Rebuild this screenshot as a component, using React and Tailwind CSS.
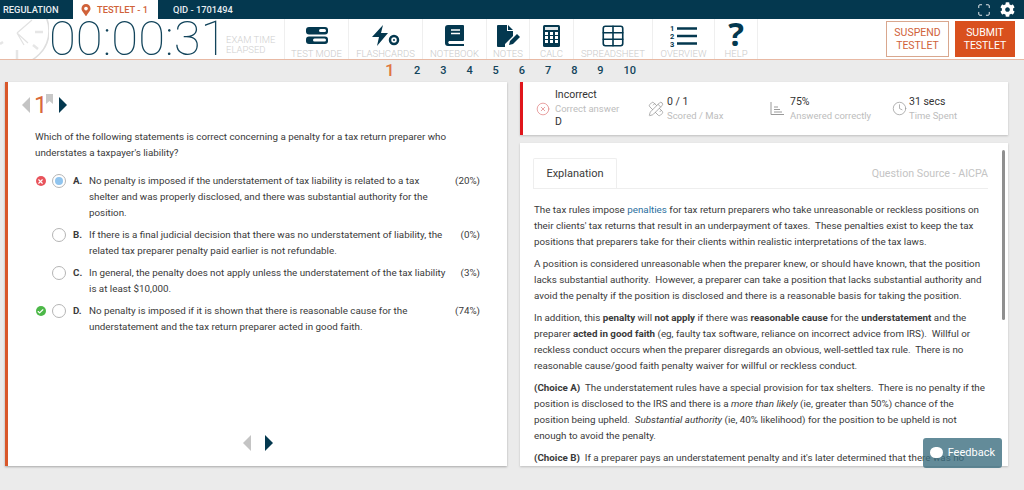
import React from "react";
import { Maximize, Table, XCircle, Clock, PencilRuler, Check, X } from "lucide-react";
import { FaCog, FaMapMarkerAlt } from "react-icons/fa";

const Tool = ({ icon, label, w }) => (
  <div className={`flex flex-col items-center justify-between h-full border-r border-[#efefef] pt-[5px] ${w}`}>
    <div className="h-[23px] flex items-center justify-center text-[#04384f]">{icon}</div>
    <span className="text-[9.5px] leading-[11px] text-[#c9c9c9] font-light whitespace-nowrap">{label}</span>
  </div>
);

const Tri = ({ dir, color, className }) => (
  <svg width="9" height="16" viewBox="0 0 9 16" className={className}>
    <path d={dir === "l" ? "M8 0v16L0 8z" : "M1 0v16l8-8z"} fill={color} />
  </svg>
);

const Choice = ({ status, selected, letter, pct, lines }) => (
  <div className="flex items-start">
    <div className="w-[13px] h-[16px] flex items-center justify-center mr-[5px] shrink-0">
      {status === "bad" && <span className="w-[10px] h-[10px] rounded-full bg-[#e8535b] flex items-center justify-center"><X size={7} color="#fff" strokeWidth={4} /></span>}
      {status === "good" && <span className="w-[10px] h-[10px] rounded-full bg-[#4cb848] flex items-center justify-center"><Check size={7} color="#fff" strokeWidth={4} /></span>}
    </div>
    <div className="w-[14px] h-[14px] rounded-full border border-[#b5b5b5] flex items-center justify-center mt-[1px] mr-[7px] shrink-0">
      {selected && <span className="w-[8px] h-[8px] rounded-full bg-[#90c4ee]" />}
    </div>
    <span className="font-bold shrink-0 w-[16px]">{letter}.</span>
    <div className="w-[351px] shrink-0">{lines.map((l) => <div key={l} className="whitespace-nowrap">{l}</div>)}</div>
    <span className="ml-auto">{pct}</span>
  </div>
);

const Stat = ({ icon, top, sub, w, gap }) => (
  <div className={`flex items-center ${w}`}>
    <div className={`text-[#9a9a9a] shrink-0 ${gap}`}>{icon}</div>
    <div className="leading-[13.5px]">
      <div className="text-[#333]">{top}</div>
      <div className="text-[#bdbdbd] text-[9.5px]">{sub}</div>
    </div>
  </div>
);

export default function App() {
  return (
    <div className="w-[1024px] h-[490px] overflow-hidden bg-[#ebebeb] flex flex-col text-[#3a3a3a] relative" style={{ fontFamily: "Roboto, sans-serif" }}>
      <header className="h-[19px] bg-[#04384f] flex items-center text-[9.3px] text-[#e8eef1] shrink-0 pr-[9px] font-medium">
        <span className="w-[73px] pl-[3px]">REGULATION</span>
        <span className="w-[85px] h-full bg-white flex items-center text-[#d0623a] pl-[7px] gap-[5px]"><FaMapMarkerAlt size={12} />TESTLET - 1</span>
        <span className="ml-[15px]">QID - 1701494</span>
        <div className="ml-auto flex items-center gap-[9px] text-white">
          <Maximize size={14} strokeWidth={1.5} />
          <FaCog size={15} />
        </div>
      </header>

      <div className="h-[41px] bg-white border-b border-[#e8b9a4] flex items-stretch shrink-0">
        <div className="w-[49px] shrink-0 relative overflow-hidden">
          <svg width="49" height="41" viewBox="0 0 49 41" className="absolute left-0 top-0">
            <circle cx="16" cy="12" r="33" fill="none" stroke="#dedede" strokeWidth="1.5" />
            <path d="M17 14L28 24M17 14L32 1M17 14L24 26" stroke="#e2e2e2" strokeWidth="1.2" fill="none" />
            <path d="M35 13h8M33 26l5 4M17 31v9M0 25l3-2" stroke="#e6e6e6" strokeWidth="2.5" fill="none" />
          </svg>
        </div>
        <span className="w-[172px] shrink-0 text-[49px] leading-[40px] font-thin text-[#12445b] whitespace-nowrap">00:00:31</span>
        <div className="w-[63px] shrink-0 pl-[5px] pt-[16px] text-[9.5px] leading-[10px] text-[#cfcfcf] font-light">EXAM TIME<br />ELAPSED</div>
        <Tool w="w-[65px] border-l" label="TEST MODE" icon={
          <svg width="22" height="17" viewBox="0 0 22 17"><rect x="0" y="0" width="22" height="7.5" rx="3" fill="#04384f" /><rect x="0" y="9.5" width="22" height="7.5" rx="3" fill="#04384f" /><rect x="13" y="2" width="7" height="3" rx="1.5" fill="#fff" /><rect x="7" y="11.5" width="13" height="3" rx="1.5" fill="#fff" /></svg>
        } />
        <Tool w="w-[74px]" label="FLASHCARDS" icon={
          <svg width="28" height="22" viewBox="0 0 28 22"><path d="M11 0L0 12h7L5 21 16 8H9z" fill="#04384f" /><circle cx="22" cy="15" r="4" fill="none" stroke="#04384f" strokeWidth="2.5" /><circle cx="22" cy="15" r="1" fill="#04384f" /></svg>
        } />
        <Tool w="w-[64px]" label="NOTEBOOK" icon={
          <svg width="19" height="21" viewBox="0 0 19 21"><path d="M3 0h15a1 1 0 011 1v14a1 1 0 01-1 1H4a2 2 0 000 3h15v2H3a3 3 0 01-3-3V3a3 3 0 013-3z" fill="#04384f" /><path d="M6 5h9M6 8.5h9" stroke="#fff" strokeWidth="1.5" /></svg>
        } />
        <Tool w="w-[43px]" label="NOTES" icon={
          <svg width="25" height="22" viewBox="0 0 25 22"><path d="M1 1a1 1 0 011-1h9v6h6v5l-8 8v3H2a1 1 0 01-1-1zM12 0l5 5h-5z" fill="#04384f" /><path d="M13 20l1-4 7-7 3 3-7 7z" fill="#04384f" /></svg>
        } />
        <Tool w="w-[44px]" label="CALC" icon={
          <svg width="17" height="22" viewBox="0 0 17 22"><rect width="17" height="22" rx="1.5" fill="#04384f" /><rect x="2" y="2" width="13" height="3" fill="#dfe7ea" />{[7, 11, 15].flatMap((y) => [2, 7, 12].map((x) => <rect key={`${x}${y}`} x={x} y={y} width="3" height="3" fill="#fff" />))}</svg>
        } />
        <Tool w="w-[79px]" label="SPREADSHEET" icon={<Table size={26} strokeWidth={1.5} />} />
        <Tool w="w-[62px]" label="OVERVIEW" icon={
          <svg width="27" height="24" viewBox="0 0 27 24"><text x="0" y="7" fontSize="7.5" fontWeight="700" fill="#04384f">1</text><text x="0" y="15" fontSize="7.5" fontWeight="700" fill="#04384f">2</text><text x="0" y="23" fontSize="7.5" fontWeight="700" fill="#04384f">3</text><path d="M7 4.5h20M7 12h20M7 19.5h20" stroke="#04384f" strokeWidth="2.3" /></svg>
        } />
        <div className="w-[43px] flex flex-col items-center justify-between border-r border-[#efefef]">
          <span className="text-[33px] leading-[29px] font-bold text-[#04384f]" style={{ fontFamily: "'Open Sans', sans-serif" }}>?</span>
          <span className="text-[9.5px] leading-[11px] text-[#c9c9c9] font-light">HELP</span>
        </div>
        <div className="ml-auto flex items-center gap-[6px] pr-[9px] text-[10.5px] leading-[13.5px] text-center">
          <button className="w-[63px] h-[36px] border border-[#d9a78e] text-[#d0623a]">SUSPEND<br />TESTLET</button>
          <button className="w-[60px] h-[36px] bg-[#d9501e] text-white">SUBMIT<br />TESTLET</button>
        </div>
      </div>

      <div className="h-[22px] flex items-center text-[11px] font-medium text-[#12445b] shrink-0">
        <span className="w-[385px]" />
        <span className="w-[29px] text-[17px] font-medium text-[#e0763f]">1</span>
        {[2, 3, 4, 5, 6, 7, 8, 9].map((n) => <span key={n} className="w-[26.2px]">{n}</span>)}
        <span>10</span>
      </div>

      <div className="flex-1 flex items-start gap-[13px] pl-[5px]">
        <section className="w-[502px] h-[384px] bg-white border-l-[3px] border-[#d9582b] shadow-[0_1px_2px_#a8a8a8] flex flex-col pl-[14px] pr-[27px] text-[9.8px] leading-[16px]">
          <div className="flex items-center h-[22px] mt-[12px] relative">
            <Tri dir="l" color="#c4c4c4" />
            <span className="text-[24px] leading-[22px] font-normal text-[#d9683a] ml-[3px] mr-[10px]">1</span>
            <svg width="7" height="10" viewBox="0 0 7 10" className="absolute left-[24px] top-[0px]"><path d="M0 0h7v10L3.5 7 0 10z" fill="#c8c8c8" /></svg>
            <Tri dir="r" color="#04384f" />
          </div>
          <p className="mt-[13px] ml-[13px] whitespace-nowrap">Which of the following statements is correct concerning a penalty for a tax return preparer who<br />understates a taxpayer's liability?</p>
          <div className="mt-[12px] ml-[12px] flex flex-col gap-[6px]">
            <Choice status="bad" selected letter="A" pct="(20%)" lines={["No penalty is imposed if the understatement of tax liability is related to a tax", "shelter and was properly disclosed, and there was substantial authority for the", "position."]} />
            <Choice letter="B" pct="(0%)" lines={["If there is a final judicial decision that there was no understatement of liability, the", "related tax preparer penalty paid earlier is not refundable."]} />
            <Choice letter="C" pct="(3%)" lines={["In general, the penalty does not apply unless the understatement of the tax liability", "is at least $10,000."]} />
            <Choice status="good" letter="D" pct="(74%)" lines={["No penalty is imposed if it is shown that there is reasonable cause for the", "understatement and the tax return preparer acted in good faith."]} />
          </div>
          <div className="mt-auto mb-[15px] flex items-center gap-[12px] ml-[221px]">
            <Tri dir="l" color="#c4c4c4" />
            <Tri dir="r" color="#04384f" />
          </div>
        </section>

        <div className="w-[488px] flex flex-col gap-[8px]">
          <div className="h-[53px] bg-white border-l-[3px] border-[#e0151b] shadow-[0_1px_2px_#bdbdbd] flex items-center pl-[13px] text-[10.5px]">
            <Stat w="w-[112px]" gap="mr-[5px]" icon={<XCircle size={14} color="#e08585" strokeWidth={1.3} />} top="Incorrect" sub={<span>Correct answer<br /><span className="text-[#333] text-[10.5px]">D</span></span>} />
            <Stat w="w-[122px]" gap="mr-[3px]" icon={<PencilRuler size={16} strokeWidth={1.2} />} top="0 / 1" sub="Scored / Max" />
            <Stat w="w-[122px]" gap="mr-[5px]" icon={
              <svg width="15" height="15" viewBox="0 0 15 15" fill="none" stroke="currentColor" strokeWidth="1"><path d="M1 1v12.5h13M4 6h4M4 8.5h6M4 11h8" /></svg>
            } top="75%" sub="Answered correctly" />
            <Stat w="w-[100px]" gap="mr-[2px]" icon={<Clock size={15} strokeWidth={1.2} />} top="31 secs" sub="Time Spent" />
          </div>
          <section className="h-[323px] bg-white shadow-[0_1px_2px_#bdbdbd] relative overflow-hidden pl-[13px] pr-[20px] text-[9.8px] leading-[16px]">
            <div className="flex items-end justify-between h-[30px] mt-[16px] border-b border-[#eeeeee]">
              <div className="h-[30px] w-[84px] border border-b-0 border-[#eeeeee] rounded-t-[2px] flex items-center justify-center text-[11px]">Explanation</div>
              <span className="self-center text-[#c4c4c4] text-[10.7px]">Question Source - AICPA</span>
            </div>
            <div className="mt-[13px] ml-[1px] flex flex-col gap-[6px] whitespace-pre">
              <p>The tax rules impose <span className="text-[#2b6f9e]">penalties</span> for tax return preparers who take unreasonable or reckless positions on<br />their clients' tax returns that result in an underpayment of taxes.  These penalties exist to keep the tax<br />positions that preparers take for their clients within realistic interpretations of the tax laws.</p>
              <p>A position is considered unreasonable when the preparer knew, or should have known, that the position<br />lacks substantial authority.  However, a preparer can take a position that lacks substantial authority and<br />avoid the penalty if the position is disclosed and there is a reasonable basis for taking the position.</p>
              <p>In addition, this <b>penalty</b> will <b>not apply</b> if there was <b>reasonable cause</b> for the <b>understatement</b> and the<br />preparer <b>acted in good faith</b> (eg, faulty tax software, reliance on incorrect advice from IRS).  Willful or<br />reckless conduct occurs when the preparer disregards an obvious, well-settled tax rule.  There is no<br />reasonable cause/good faith penalty waiver for willful or reckless conduct.</p>
              <p><b>(Choice A)</b>  The understatement rules have a special provision for tax shelters.  There is no penalty if the<br />position is disclosed to the IRS and there is a <i>more than likely</i> (ie, greater than 50%) chance of the<br />position being upheld.  <i>Substantial authority</i> (ie, 40% likelihood) for the position to be upheld is not<br />enough to avoid the penalty.</p>
              <p><b>(Choice B)</b>  If a preparer pays an understatement penalty and it's later determined that there was no</p>
            </div>
            <div className="absolute right-[3px] top-[7px] w-[3px] h-[170px] bg-[#8f8f8f] rounded-full" />
          </section>
        </div>
      </div>

      <button className="absolute left-[923px] top-[438px] w-[79px] h-[30px] rounded-[3px] bg-[#3c6e80]/80 text-white text-[11px] flex items-center justify-end pr-[7px]">
        <span className="absolute left-[7px] top-[9px] w-[13px] h-[11px] rounded-full bg-white" />Feedback
      </button>
    </div>
  );
}
